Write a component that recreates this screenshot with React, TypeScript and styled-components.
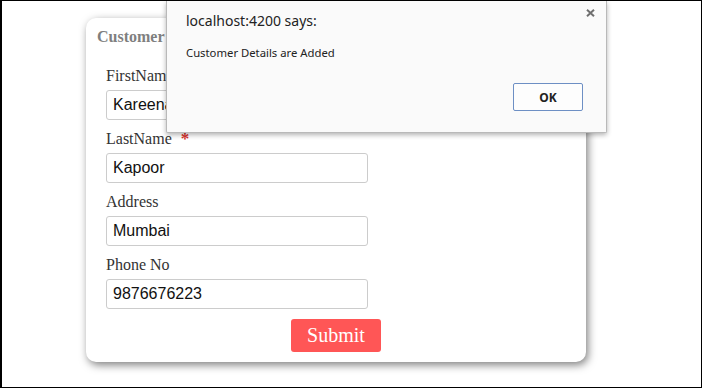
import React from "react";
import styled, { createGlobalStyle } from "styled-components";

const Global = createGlobalStyle`
  html, body { margin: 0; padding: 0; background: #fff; }
  * { box-sizing: border-box; }
`;

const Page = styled.div`
  position: relative;
  width: 702px;
  height: 388px;
  border: 1px solid #000;
  border-left-width: 2px;
  padding: 17px 0 0 84px;
  background: #fff;
  font-family: "Liberation Serif", "Times New Roman", serif;
`;

const Card = styled.div`
  width: 500px;
  height: 344px;
  background: #fff;
  border-radius: 10px;
  box-shadow: 2px 3px 8px rgba(0, 0, 0, 0.5);
  padding: 10px 0 10px 11px;
  display: flex;
  flex-direction: column;
`;

const Title = styled.div`
  font-size: 16px;
  line-height: 18px;
  font-weight: bold;
  color: #7f7f7f;
`;

const Form = styled.form`
  display: flex;
  flex-direction: column;
  gap: 10px;
  margin: 21px 0 0 9px;
`;

const Field = styled.div`
  display: flex;
  flex-direction: column;
  gap: 5px;
`;

const Label = styled.label`
  font-size: 16px;
  line-height: 18px;
  color: #333;
`;

const Required = styled.span`
  color: #d9302c;
  margin-left: 9px;
  font-size: 17px;
  font-weight: bold;
  line-height: 0;
`;

const Input = styled.input`
  width: 262px;
  height: 30px;
  border: 1px solid #ccc;
  border-radius: 3px;
  padding: 0 6px;
  font-family: "Liberation Sans", Arial, sans-serif;
  font-size: 16px;
  color: #111;
  background: #fff;
  outline: none;
`;

const Actions = styled.div`
  display: flex;
  justify-content: center;
  margin-right: 20px;
`;

const SubmitButton = styled.button`
  width: 90px;
  height: 33px;
  border: none;
  border-radius: 3px;
  background: #ff5656;
  color: #fff;
  font-family: "Liberation Serif", "Times New Roman", serif;
  font-size: 20px;
  padding: 0;
  cursor: pointer;
`;

const Dialog = styled.div`
  position: absolute;
  left: 164px;
  top: 0;
  width: 441px;
  height: 132px;
  background: #fafafa;
  border: 1px solid #b9b9b9;
  border-top: none;
  border-radius: 0 0 2px 2px;
  box-shadow: 0 2px 5px rgba(0, 0, 0, 0.3);
  padding: 10px 23px 0 19px;
  font-family: "Noto Sans", "Open Sans", sans-serif;
  color: #222;
  display: flex;
  flex-direction: column;
`;

const DialogTitle = styled.div`
  font-size: 14px;
  line-height: 20px;
`;

const DialogMessage = styled.div`
  margin-top: 14px;
  font-size: 11.3px;
  line-height: 16px;
`;

const DialogActions = styled.div`
  display: flex;
  justify-content: flex-end;
  margin-top: 22px;
`;

const OkButton = styled.button`
  width: 70px;
  height: 28px;
  border: 1px solid #6d8fc4;
  border-radius: 2px;
  background: #fdfdfd;
  font-family: "Noto Sans", "Open Sans", sans-serif;
  font-weight: bold;
  font-size: 12px;
  color: #222;
  padding: 0;
`;

const Close = styled.svg`
  position: absolute;
  right: 11px;
  top: 8px;
`;

const fields = [
  { label: "FirstName", value: "Kareena" },
  { label: "LastName", value: "Kapoor", required: true },
  { label: "Address", value: "Mumbai" },
  { label: "Phone No", value: "9876676223" },
];

export default function App() {
  return (
    <>
      <Global />
      <Page>
        <Card>
          <Title>Customer Details</Title>
          <Form onSubmit={(e) => e.preventDefault()}>
            {fields.map((f) => (
              <Field key={f.label}>
                <Label>
                  {f.label}
                  {f.required && <Required>*</Required>}
                </Label>
                <Input defaultValue={f.value} />
              </Field>
            ))}
            <Actions>
              <SubmitButton type="submit">Submit</SubmitButton>
            </Actions>
          </Form>
        </Card>
        <Dialog>
          <Close width="9" height="8" viewBox="0 0 9 8">
            <path d="M1 0.8 L8 7.2 M8 0.8 L1 7.2" stroke="#6f6f6f" strokeWidth="2" />
          </Close>
          <DialogTitle>localhost:4200 says:</DialogTitle>
          <DialogMessage>Customer Details are Added</DialogMessage>
          <DialogActions>
            <OkButton>OK</OkButton>
          </DialogActions>
        </Dialog>
      </Page>
    </>
  );
}
